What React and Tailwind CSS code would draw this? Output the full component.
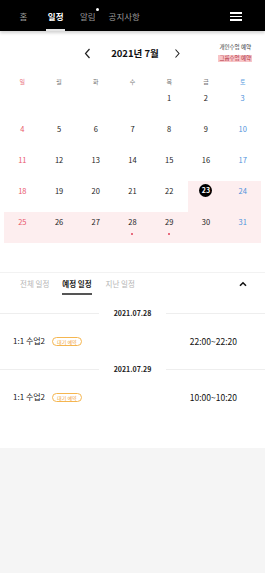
import React from "react"

const weeks = [
  [null, null, null, null, 1, 2, 3],
  [4, 5, 6, 7, 8, 9, 10],
  [11, 12, 13, 14, 15, 16, 17],
  [18, 19, 20, 21, 22, 23, 24],
  [25, 26, 27, 28, 29, 30, 31],
]
const dayNames = ["일", "월", "화", "수", "목", "금", "토"]
const booked = [23, 24, 25, 26, 27, 28, 29, 30, 31]
const dotted = [28, 29]

const schedule = [
  { date: "2021.07.28", title: "1:1 수업2", time: "22:00~22:20" },
  { date: "2021.07.29", title: "1:1 수업2", time: "10:00~10:20" },
]

function Header() {
  return (
    <div className="relative z-10 h-[31px] bg-black flex items-stretch shadow-[0_2px_3px_rgba(0,0,0,0.18)]">
      <div className="flex items-stretch text-[8.5px] text-[#9a9a9a]">
        <div className="ml-[19.5px] pt-[4px] flex items-center border-b-2 border-transparent">홈</div>
        <div className="ml-[18.5px] px-[2px] pt-[4px] flex items-center border-b-2 border-[#e5e5e5] text-white font-bold">일정</div>
        <div className="relative ml-[14.5px] pt-[4px] flex items-center border-b-2 border-transparent">
          알림
          <span className="absolute top-[8px] right-[-3px] w-[3px] h-[3px] rounded-full bg-white" />
        </div>
        <div className="ml-[13px] pt-[4px] flex items-center border-b-2 border-transparent">공지사항</div>
      </div>
      <div className="ml-auto mr-[23px] flex flex-col justify-center gap-[2px] pt-[2px]">
        <span className="block w-[12px] h-[1.5px] bg-white" />
        <span className="block w-[12px] h-[1.5px] bg-white" />
        <span className="block w-[12px] h-[1.5px] bg-white" />
      </div>
    </div>
  )
}

function Calendar() {
  return (
    <div>
      <div className="grid grid-cols-[1fr_auto_1fr] items-center h-[44px]">
        <div />
        <div className="flex items-center">
          <svg width="7" height="11" viewBox="0 0 7 11" className="mr-[20px]">
            <path d="M5.5 1 L1.5 5.5 L5.5 10" fill="none" stroke="#222" strokeWidth="1.2" />
          </svg>
          <span className="text-[9.5px] font-bold text-[#111]">2021년 7월</span>
          <svg width="7" height="11" viewBox="0 0 7 11" className="ml-[15px]">
            <path d="M1.5 1.5 L5 5.5 L1.5 9.5" fill="none" stroke="#222" strokeWidth="1.1" />
          </svg>
        </div>
        <div className="flex flex-col items-end pr-[13px] gap-[4px] text-[5.5px] leading-[7px]">
          <span className="text-[#333] pr-[1px]">개인수업 예약</span>
          <span className="bg-[#f8c5c8] text-[#b03040] px-[1px]">그룹수업 예약</span>
        </div>
      </div>
      <div className="grid grid-cols-7 px-1 h-[13px] items-center text-[6px]">
        {dayNames.map((d, i) => (
          <div
            key={d}
            className={
              "text-center " +
              (i === 0 ? "text-[#e9707e]" : i === 6 ? "text-[#5c9ee0]" : "text-[#777]")
            }
          >
            {d}
          </div>
        ))}
      </div>
      <div className="px-1">
        {weeks.map((w, wi) => (
          <div key={wi} className="grid grid-cols-7">
            {w.map((n, i) => {
              const color = i === 0 ? "text-[#e9586b]" : i === 6 ? "text-[#4f93dc]" : "text-[#222]"
              return (
                <div
                  key={i}
                  className={
                    "h-[31px] flex flex-col items-center pt-[3px] " +
                    (n && booked.includes(n) ? "bg-[#fdeeef]" : "")
                  }
                >
                  {n === 23 ? (
                    <span className="w-[13px] h-[13px] rounded-full bg-black text-white text-[7px] font-bold flex items-center justify-center">
                      23
                    </span>
                  ) : (
                    <span className={"text-[7.5px] leading-[13px] " + color}>{n || ""}</span>
                  )}
                  {dotted.includes(n) && (
                    <span className="mt-[5px] w-[2px] h-[2px] rounded-full bg-[#e0405a]" />
                  )}
                </div>
              )
            })}
          </div>
        ))}
      </div>
    </div>
  )
}

function Tabs() {
  return (
    <div className="mt-[29px] border-t border-[#f2f2f2] flex items-stretch text-[7.5px]">
      <div className="ml-[20px] pt-[5px] pb-[4px] border-b-2 border-transparent text-[#b5b5b5]">전체 일정</div>
      <div className="ml-[13px] pt-[5px] pb-[4px] border-b-2 border-[#555] text-[#222] font-bold">예정 일정</div>
      <div className="ml-[14px] pt-[5px] pb-[4px] border-b-2 border-transparent text-[#b5b5b5]">지난 일정</div>
      <div className="ml-auto mr-[18px] flex items-center pb-[1px]">
        <svg width="8" height="6" viewBox="0 0 8 6">
          <path d="M1 4.8 L4 1.8 L7 4.8" fill="none" stroke="#111" strokeWidth="1.6" />
        </svg>
      </div>
    </div>
  )
}

function ScheduleList() {
  return (
    <div className="pt-[13px] pb-[28px]">
      {schedule.map((s, i) => (
        <div key={i}>
          <div className="flex items-center h-[10px]">
            <div className="flex-1 h-px bg-[#eeeeee]" />
            <span className="px-[15px] text-[7px] font-bold text-[#222]">{s.date}</span>
            <div className="flex-1 h-px bg-[#eeeeee]" />
          </div>
          <div className="h-[46px] flex items-center pl-[13px] pr-[28px]">
            <span className="text-[8px] text-[#222]">{s.title}</span>
            <span className="ml-[7px] h-[9px] px-[4px] rounded-full border border-[#f5b650] text-[#f0a030] text-[5px] flex items-center">
              대기 예약
            </span>
            <span className="ml-auto text-[8.5px] text-[#111]">{s.time}</span>
          </div>
        </div>
      ))}
    </div>
  )
}

export default function App() {
  return (
    <div className="w-[265px] min-h-[573px] bg-[#f5f5f5] font-['Noto_Sans_CJK_KR','Noto_Sans',sans-serif]">
      <div className="bg-white">
        <Header />
        <Calendar />
        <Tabs />
        <ScheduleList />
      </div>
    </div>
  )
}
